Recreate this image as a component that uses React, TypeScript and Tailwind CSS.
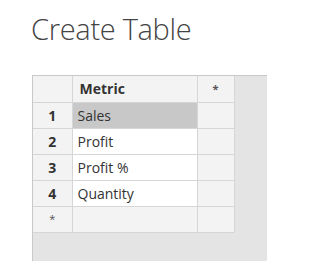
import React from "react";

const rows = ["Sales", "Profit", "Profit %", "Quantity"];

export default function App() {
  return (
    <div
      className="w-[267px] h-[261px] bg-white overflow-hidden flex flex-col"
      style={{ fontFamily: '"Open Sans", "Noto Sans", sans-serif' }}
    >
      <div className="pl-[31px] pt-[9px] h-[75px] text-[29px] font-light text-[#444444] leading-[40px] tracking-[-0.3px]">
        Create Table
      </div>
      <div className="ml-[32px] flex-1 bg-[#e4e4e4] border-t border-l border-[#c9c9c9]">
        <table className="border-collapse text-[14px] text-[#333333]">
          <tbody>
            <tr className="h-[26px]">
              <td className="w-[39px] bg-[#f3f3f3] border-r border-b border-[#d6d6d6]"></td>
              <td className="w-[125px] bg-[#f3f3f3] border-r border-b border-[#d6d6d6] pl-[7px] font-bold">
                Metric
              </td>
              <td className="w-[37px] bg-[#f3f3f3] border-r border-b border-[#d6d6d6] text-center text-[11px] font-bold text-[#555555]">
                *
              </td>
            </tr>
            {rows.map((r, i) => (
              <tr key={r} className="h-[26px]">
                <td className="bg-[#f3f3f3] border-r border-b border-[#d6d6d6] text-center font-bold">
                  {i + 1}
                </td>
                <td
                  className={
                    i === 0
                      ? "bg-[#c8c8c8] border-r border-b border-[#d6d6d6] pl-[5px]"
                      : "bg-white border-r border-b border-[#d6d6d6] pl-[5px]"
                  }
                >
                  {r}
                </td>
                <td className="bg-[#f3f3f3] border-r border-b border-[#d6d6d6]"></td>
              </tr>
            ))}
            <tr className="h-[26px]">
              <td className="bg-[#f3f3f3] border-r border-b border-[#d6d6d6] text-center text-[11px] text-[#555555]">
                *
              </td>
              <td className="bg-[#f3f3f3] border-r border-b border-[#d6d6d6]"></td>
              <td className="bg-[#f3f3f3] border-r border-b border-[#d6d6d6]"></td>
            </tr>
          </tbody>
        </table>
      </div>
    </div>
  );
}
